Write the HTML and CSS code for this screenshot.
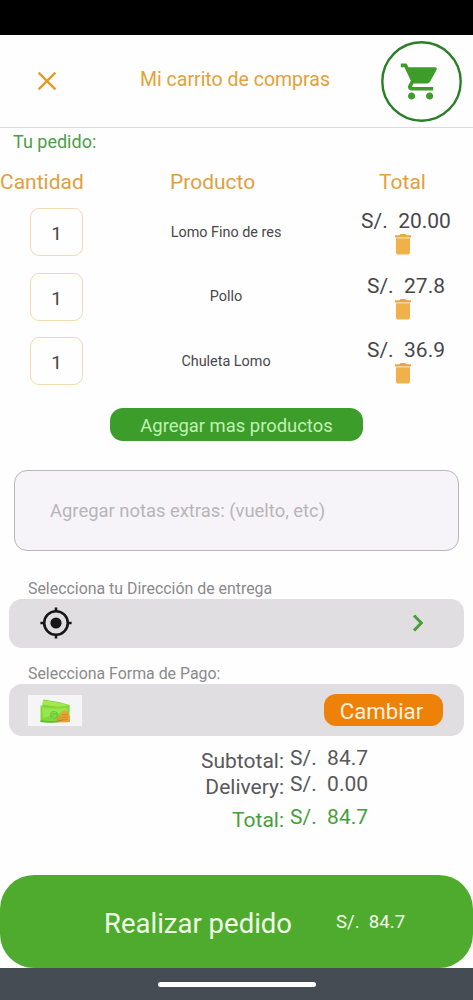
FILE: index.html
```html
<!DOCTYPE html>
<html lang="es">
<head>
<meta charset="utf-8">
<title>Mi carrito de compras</title>
<link rel="stylesheet" href="styles.css">
</head>
<body>
<div class="status-bar"></div>
<header class="header">
  <svg class="close" viewBox="0 0 20 20"><path d="M1.6 1.6L18.4 18.4M18.4 1.6L1.6 18.4"/></svg>
  <h1 class="title">Mi carrito de compras</h1>
  <svg class="cart" viewBox="0 0 81 81"><circle cx="40.500" cy="40.500" r="39.200"/><path transform="translate(18 19) scale(1.8)" d="M7 18c-1.1 0-1.99.9-1.99 2S5.900 22 7 22s2-.9 2-2-.9-2-2-2zM1 2v2h2l3.600 7.590-1.350 2.450c-.16.28-.25.61-.25.96 0 1.100.9 2 2 2h12v-2H7.420c-.14 0-.25-.11-.25-.25l.03-.12.900-1.630h7.450c.75 0 1.410-.41 1.750-1.030l3.580-6.490A1 1 0 0 0 20 4H5.210l-.94-2H1zm16 16c-1.100 0-1.990.9-1.990 2s.89 2 1.990 2 2-.9 2-2-.9-2-2-2z"/></svg>
</header>
<main class="content">
  <p class="order-label">Tu pedido:</p>
  <div class="columns"><span>Cantidad</span><span>Producto</span><span>Total</span></div>
  <div class="item">
    <div class="qty">1</div><div class="name">Lomo Fino de res</div>
    <div class="cost"><span>S/.  20.00</span><svg class="trash" viewBox="0 0 16 21"><path class="lid" d="M0 1.200h4.500L5.500 0h5l1 1.200H16v2.300H0z"/><path d="M1 4.300h14v14.200a2 2 0 0 1-2 2H3a2 2 0 0 1-2-2z"/></svg></div>
  </div>
  <div class="item">
    <div class="qty">1</div><div class="name">Pollo</div>
    <div class="cost"><span>S/.  27.8</span><svg class="trash" viewBox="0 0 16 21"><path class="lid" d="M0 1.200h4.500L5.500 0h5l1 1.200H16v2.300H0z"/><path d="M1 4.300h14v14.200a2 2 0 0 1-2 2H3a2 2 0 0 1-2-2z"/></svg></div>
  </div>
  <div class="item">
    <div class="qty">1</div><div class="name">Chuleta Lomo</div>
    <div class="cost"><span>S/.  36.9</span><svg class="trash" viewBox="0 0 16 21"><path class="lid" d="M0 1.200h4.500L5.500 0h5l1 1.200H16v2.300H0z"/><path d="M1 4.300h14v14.200a2 2 0 0 1-2 2H3a2 2 0 0 1-2-2z"/></svg></div>
  </div>
  <div class="add">Agregar mas productos</div>
  <div class="notes">Agregar notas extras: (vuelto, etc)</div>
  <p class="field-label">Selecciona tu Dirección de entrega</p>
  <div class="panel address">
    <svg class="target" viewBox="0 0 32 32"><circle cx="16" cy="16" r="11.800"/><path d="M16 .4v4M16 27.600v4M.4 16h4M27.600 16h4"/><circle class="dot" cx="16" cy="16" r="5.600"/></svg>
    <svg class="chevron" viewBox="0 0 12 18"><path d="M2 1.500L9.300 9 2 16.500"/></svg>
  </div>
  <p class="field-label pay-label">Selecciona Forma de Pago:</p>
  <div class="panel payment">
    <svg class="money" viewBox="0 0 54 31">
      <path fill="#f5f5f5" d="M0 0h54v31H0z"/>
      <path fill="#79ce35" d="M15.500 4.500Q28 6 41.500 10l-1 14-27.500-6z"/>
      <path fill="#a3e84c" d="M15 5.300Q28 6.500 40.500 10.300L36 13 14 9.500z"/>
      <path fill="#80d936" d="M12.500 10.500Q27 13 41.500 10.500V26Q27 28 12.500 27z"/>
      <path fill="#98e64f" d="M14 12.500q12 2 25.500 0V16L15 23z"/>
      <path fill="#55b92d" d="M12.500 25.300q10 1.500 19 .5v1.500q-9 .8-19-.3z"/>
      <circle cx="26" cy="20" r="4" fill="#68cb3b"/>
      <path fill="none" stroke="#8fdc62" d="M28 17.500q-4-1-4 1t3 2-3 2.500"/>
      <path fill="#d8a12e" d="M29 21.500q3-2 6 0v5.800h-6z"/>
      <path fill="#eda332" d="M33.500 16.500q3.500-2 6.500 0v10.800h-6.500zM38.500 20.500q2.500-.6 3.500 0v6.500h-3.500z"/>
      <path fill="none" stroke="#bd7825" stroke-width=".7" d="M34 19.500q3 1 6 0M34 22q3 1 6 0M34 24.500q3 1 6 0M29 25q3 1 6 0"/>
    </svg>
    <div class="change">Cambiar</div>
  </div>
  <div class="summary">
    <div class="sum-row"><span>Subtotal:</span><span class="amount">S/.  84.7</span></div>
    <div class="sum-row"><span>Delivery:</span><span class="amount">S/.  0.00</span></div>
    <div class="sum-row grand"><span>Total:</span><span class="amount">S/.  84.7</span></div>
  </div>
</main>
<footer class="checkout"><span class="checkout-text">Realizar pedido</span><span class="checkout-price">S/.  84.7</span></footer>
<div class="nav-bar"><div class="handle"></div></div>
</body>
</html>
```
FILE: styles.css
```css
* { box-sizing: border-box; }
body {
  margin: 0;
  width: 473px;
  height: 1000px;
  overflow: hidden;
  display: flex;
  flex-direction: column;
  background: #fefefe;
  color: #49474b;
  font-family: Roboto, sans-serif;
}
p, h1 { margin: 0; font-weight: 400; }
svg { display: block; flex: none; }
.status-bar { height: 35px; background: #000; flex: none; }
.header {
  height: 93px;
  flex: none;
  display: flex;
  align-items: center;
  border-bottom: 1px solid #d9d9de;
  padding-left: 37px;
}
.close { width: 20px; height: 20px; fill: none; stroke: #e99a24; stroke-width: 2.4; }
.title { margin-left: 83px; width: 241px; font-size: 19.500px; line-height: 24px; color: #e5a037; padding-bottom: 2px; white-space: nowrap; }
.cart { width: 81px; height: 81px; fill: #3d9c2a; }
.cart circle { fill: none; stroke: #2a7f27; stroke-width: 2.400; }
.content { height: 747px; flex: none; }
.order-label { padding: 3px 0 0 13px; font-size: 18px; line-height: 22px; color: #4c9f48; }
.columns {
  display: grid;
  grid-template-columns: 170px 162px 141px;
  margin-top: 16px;
  height: 31px;
  line-height: 27px;
  font-size: 21px;
  color: #e1a03c;
}
.columns span:last-child { text-align: center; }
.item {
  display: grid;
  grid-template-columns: 113px 226px 134px;
  align-items: center;
  height: 64.500px;
}
.qty {
  width: 53px;
  height: 48px;
  margin-left: 30px;
  border: 1px solid #f1dab0;
  border-radius: 9px;
  font-size: 19px;
  line-height: 49px;
  text-align: center;
}
.name { text-align: center; font-size: 14.400px; }
.cost { display: flex; flex-direction: column; align-items: center; height: 48px; font-size: 21px; line-height: 26px; white-space: pre; }
.trash { width: 16px; height: 21px; fill: #f0b04a; margin-right: 7px; }
.lid { fill: #e5a943; }
.add {
  width: 253px;
  height: 33px;
  margin: 14.500px 0 0 110px;
  border-radius: 13px;
  background: #3c9d2a;
  color: #c3f0b5;
  font-size: 18.400px;
  line-height: 36px;
  text-align: center;
}
.notes {
  width: 445px;
  height: 81px;
  margin: 29px 0 0 14px;
  padding-left: 35px;
  border: 1px solid #b9b6b9;
  border-radius: 13px;
  background: #f6f4f8;
  color: #b7b5b9;
  font-size: 18.400px;
  line-height: 80px;
}
.field-label { margin: 28px 0 0 28px; height: 20px; font-size: 15.900px; line-height: 20px; color: #8b898d; }
.panel {
  width: 455px;
  height: 49px;
  margin-left: 9px;
  border-radius: 13px;
  background: #e0dee1;
  display: flex;
  align-items: center;
  justify-content: space-between;
}
.address { padding: 0 40px 1px 31px; }
.target { width: 32px; height: 32px; fill: none; stroke: #171619; stroke-width: 2.600; }
.dot { fill: #171619; stroke: none; }
.chevron { width: 12px; height: 18px; fill: none; stroke: #4a9e38; stroke-width: 3; }
.pay-label { margin-top: 16px; }
.payment { height: 52px; padding: 0 21px 0 19px; }
.money { width: 54px; height: 31px; }
.change { width: 119px; height: 32px; border-radius: 12px; background: #ee8107; color: #fff1df; font-size: 22.200px; line-height: 34px; text-align: center; padding-right: 4px; }
.summary { padding-top: 12px; font-size: 21px; color: #59575b; }
.sum-row { display: grid; grid-template-columns: 284px 1fr; column-gap: 6px; height: 26px; line-height: 26px; }
.sum-row span:first-child { text-align: right; }
.amount { white-space: pre; margin-top: -3px; }
.grand { margin-top: 7px; color: #479e39; }
.checkout {
  height: 93px;
  flex: none;
  border-radius: 34px;
  background: #4fab2d;
  color: #f0fbe7;
  display: flex;
  align-items: center;
  padding-left: 104px;
}
.checkout-text { width: 232px; font-size: 27.500px; line-height: 34px; margin-top: 4px; white-space: nowrap; }
.checkout-price { font-size: 18.600px; white-space: pre; }
.nav-bar { height: 32px; flex: none; background: #454c54; padding-top: 14px; }
.handle { width: 158px; height: 5px; margin: 0 auto; border-radius: 3px; background: #fff; }
```
